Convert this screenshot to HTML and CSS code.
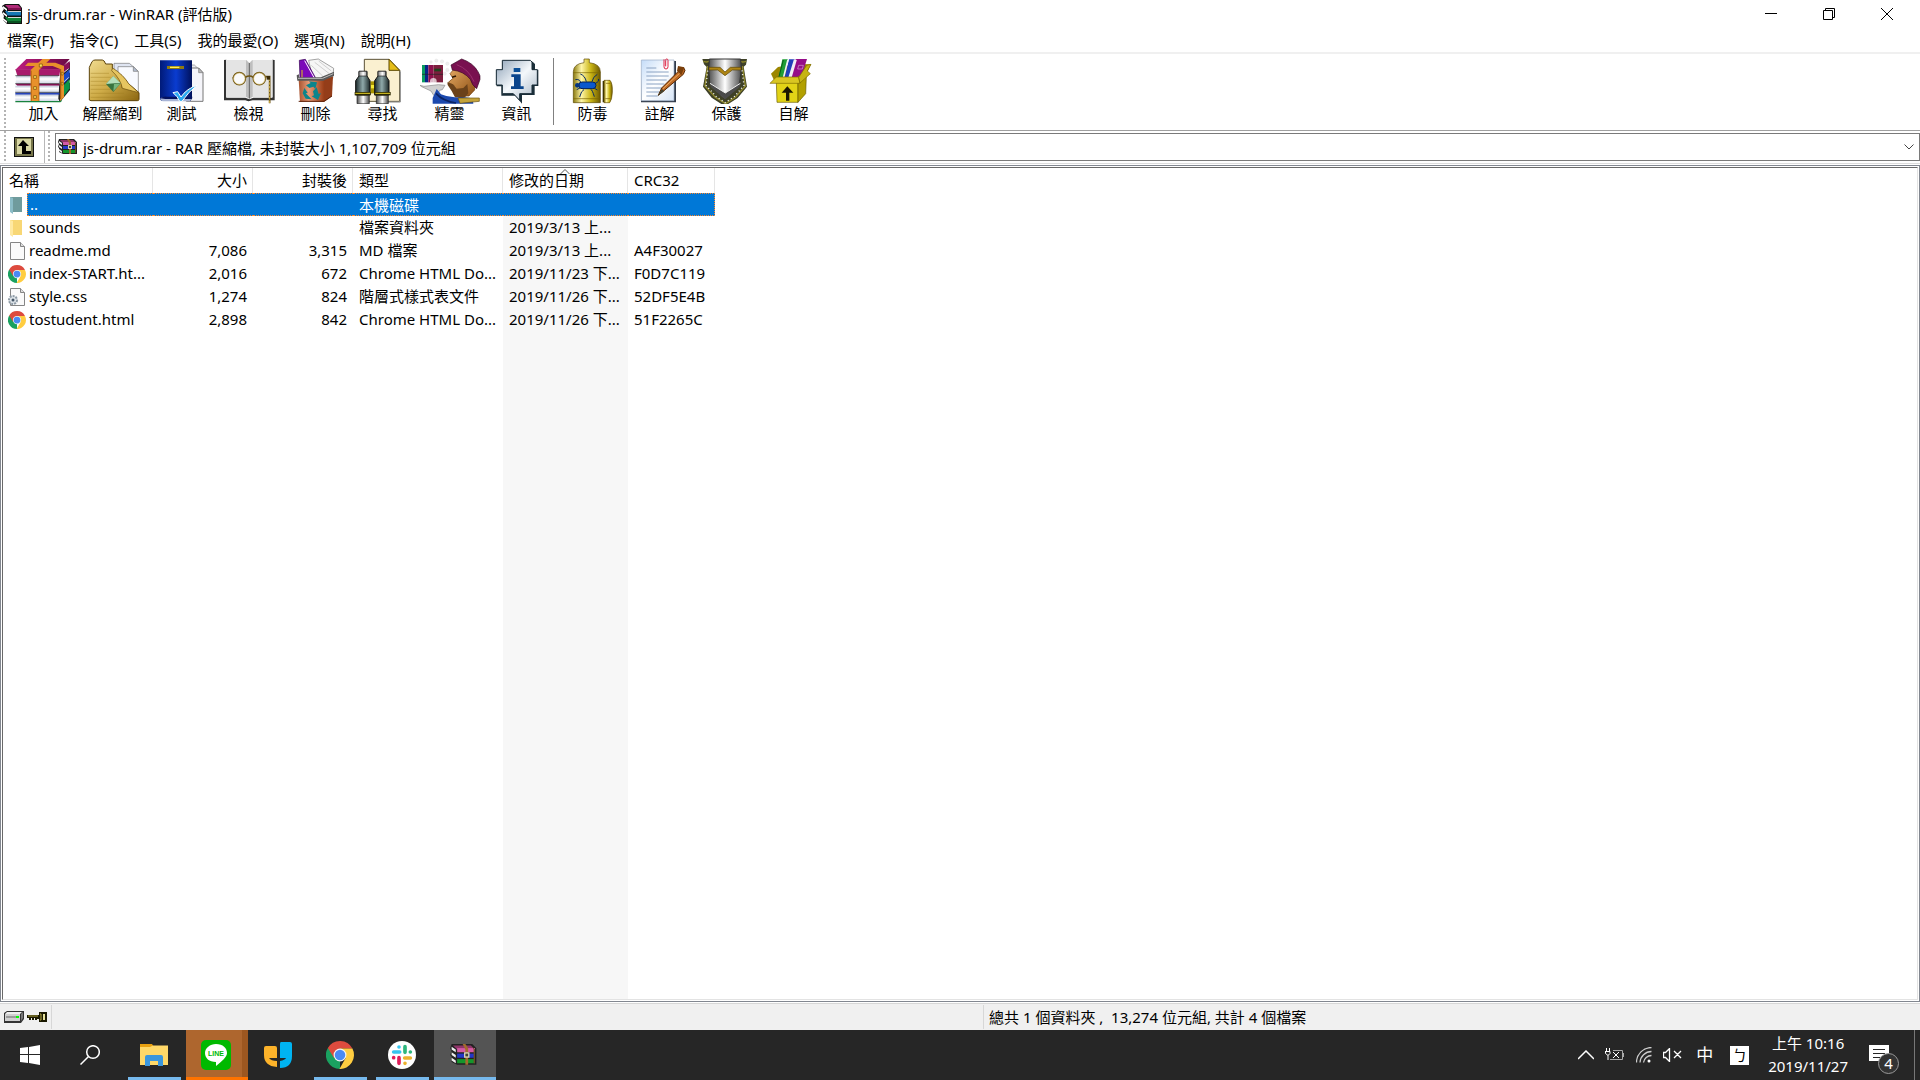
FILE: index.html
```
<!DOCTYPE html>
<html lang="zh-Hant">
<head>
    <meta charset="UTF-8">
    <meta name="viewport" content="width=device-width, initial-scale=1.0">
    <title>js-drum.rar - WinRAR (評估版)</title>
    <link rel="stylesheet" href="styles.css">
</head>
<body>
    <!-- shared gradients and icons -->
    <svg class="defs" width="0" height="0" aria-hidden="true">
        <defs>
            <linearGradient id="gold"><stop offset="0" stop-color="#8a7a10"/><stop offset=".3" stop-color="#fff6a8"/><stop offset=".65" stop-color="#c9b414"/><stop offset="1" stop-color="#6e5a00"/></linearGradient>
            <linearGradient id="folder" x2="1" y2="1"><stop offset="0" stop-color="#f0dc90"/><stop offset=".5" stop-color="#cfac48"/><stop offset="1" stop-color="#8a6510"/></linearGradient>
            <linearGradient id="plum"><stop offset="0" stop-color="#bd1c7e"/><stop offset="1" stop-color="#6a0a44"/></linearGradient>
            <linearGradient id="pages" y2="1" x2="0"><stop offset="0" stop-color="#b9c3d6"/><stop offset=".4" stop-color="#fff"/><stop offset="1" stop-color="#cfd6e4"/></linearGradient>
            <linearGradient id="blue"><stop offset="0" stop-color="#001a78"/><stop offset=".5" stop-color="#0a3cd0"/><stop offset="1" stop-color="#00115c"/></linearGradient>
            <linearGradient id="steel"><stop offset="0" stop-color="#4d4d4d"/><stop offset=".5" stop-color="#fff"/><stop offset="1" stop-color="#4a4a4a"/></linearGradient>
            <linearGradient id="tube"><stop offset="0" stop-color="#1d2a2c"/><stop offset=".5" stop-color="#8fa9aa"/><stop offset="1" stop-color="#1c2829"/></linearGradient>
            <linearGradient id="bin"><stop offset="0" stop-color="#a85430"/><stop offset=".4" stop-color="#e79b77"/><stop offset="1" stop-color="#9a3d16"/></linearGradient>
            <linearGradient id="bubble" x2="1" y2="1"><stop offset="0" stop-color="#8fa3b8"/><stop offset=".5" stop-color="#f4f8fb"/><stop offset="1" stop-color="#a5b4c4"/></linearGradient>
            <linearGradient id="sheet" x2="1" y2="1"><stop offset="0" stop-color="#c4dcf8"/><stop offset=".5" stop-color="#fff"/><stop offset="1" stop-color="#d7e5f7"/></linearGradient>
            <linearGradient id="skin" x2="1" y2="1"><stop offset="0" stop-color="#e9ad66"/><stop offset="1" stop-color="#8a4d12"/></linearGradient>
        </defs>
        <symbol id="books" viewBox="0 0 20 20">
            <path d="M3 0h14l3 4v16H5l-4-4 1-4-2-4 2-3-2-3z" fill="#111"/>
            <path d="M3 1h13l3 3H6z" fill="#b02a78"/><path d="M6 4h13v2H6z" fill="#7a0f4c"/>
            <path d="M3 7h3l1 1h12v4H6z" fill="#1878b4"/><path d="M6 11h13v1H6z" fill="#0b4470"/>
            <path d="M3 13h3l1 1h12v4H6z" fill="#128238"/><path d="M6 17h13v2H6z" fill="#075020"/>
            <path d="M1 2l4 3v2L1 4zM1 8l4 3v2l-4-3zM1 14l4 3v2l-4-3z" fill="#fff"/>
            <path d="M6 7h13v1H6zM6 13h13v1H6z" fill="#d7d7d7"/>
        </symbol>
        <symbol id="belted" viewBox="0 0 20 16">
            <path d="M1 0h15l3 3v12H5l-4-2V9l-1-1 1-3-1-2z" fill="#222"/>
            <path d="M2 1h13l3 3H5z" fill="#8f3569"/><path d="M5 3h13v3H5z" fill="#d45aa5"/>
            <path d="M5 7h13v3H5z" fill="#2336c8"/><path d="M5 11h13v3H5z" fill="#14962c"/>
            <path d="M1 2l3 2v2L1 4zM1 6l3 2v2L1 8zM1 10l3 2v2l-3-2z" fill="#eee"/>
            <path d="M9 0h2l2 3v12h-2V4z" fill="#a26b2d"/><path d="M10 6h4v4h-4z" fill="#d9d0b5"/><path d="M11 7h2v2h-2z" fill="#443"/>
            <path d="M16 2l2 2v10h-1V4z" fill="#6b4b24"/>
        </symbol>
        <symbol id="chrome" viewBox="0 0 48 48">
            <path d="M24 24V48A24 24 0 0 1 3.200 12z" fill="#1aa160"/>
            <path d="M24 13h21.300A24 24 0 0 0 3.200 12l10.500 17z" fill="#dd4b3e"/>
            <path d="M45.300 13H24l9.500 16.500L23 48A24 24 0 0 0 45.300 13z" fill="#ffcd40"/>
            <circle cx="24" cy="24" r="11" fill="#f4f4f4"/><circle cx="24" cy="24" r="9" fill="#4a8af4"/>
        </symbol>
        <symbol id="page" viewBox="0 0 15 18">
            <path d="M.5.5h10l4 4v13H.5z" fill="#fafafa" stroke="#858585"/><path d="M10.500.5v4h4" fill="#ddd" stroke="#858585"/>
        </symbol>
    </svg>

    <header class="titlebar">
        <svg class="app-icon" width="20" height="20"><use href="#books"/></svg>
        <h1>js-drum.rar - WinRAR (評估版)</h1>
        <div class="window-controls">
            <button aria-label="最小化"><svg width="12" height="12"><path d="M0 5.500h12" stroke="#000"/></svg></button>
            <button aria-label="還原"><svg width="12" height="12" fill="none" stroke="#000"><path d="M.5 2.500h9v9h-9zM2.500 2V.5h9v9H10"/></svg></button>
            <button aria-label="關閉"><svg width="12" height="12"><path d="M0 0l12 12M12 0L0 12" stroke="#000"/></svg></button>
        </div>
    </header>

    <nav class="menubar">
        <button>檔案(F)</button>
        <button>指令(C)</button>
        <button>工具(S)</button>
        <button>我的最愛(O)</button>
        <button>選項(N)</button>
        <button>說明(H)</button>
    </nav>

    <div class="toolbar">
        <span class="grip"></span>
        <button>
            <svg viewBox="36 24 189 138">
                <path d="M182 55l28-18v22l-8 7v2l8 0v22l-8 6v2h8v22l-30 36-6-10z" fill="#222"/>
                <path d="M182 53l27-20v22l-27 20z" fill="#8a0f58"/><path d="M182 82l27-24v26l-27 27z" fill="#1948c4"/><path d="M182 115l27-28v28l-27 36z" fill="#0d9448"/>
                <path d="M180 76l26-20M180 107l26-25" stroke="#c6cbd8" stroke-width="3"/>
                <path d="M79 27h130l-28 32H46z" fill="url(#plum)"/><path d="M46 58h135l-3 19H52z" fill="#a81a6c"/>
                <path d="M48 77h126l4 24H47z" fill="url(#pages)"/><path d="M46 101h132v6H52z" fill="#8a1058"/>
                <path d="M46 107h130v21H45z" fill="url(#pages)"/><path d="M46 128h132v6H46z" fill="#2443b8"/>
                <path d="M45 134h130v19H46z" fill="url(#pages)"/><path d="M46 153h134l5-5v6l-4 3H46z" fill="#18823e"/>
                <path d="M46 127h132M46 101h132M46 77h132" stroke="#222" stroke-width="2"/>
                <path d="M84 38h82l26 10v94l-12 11V57l-22-9H75z" fill="#e8912b"/><path d="M182 57v90" stroke="#9d5408" stroke-width="3"/>
                <path d="M127 27h24l-34 33v93H92V60z" fill="#e8912b"/><path d="M94 62v91M117 62v91" stroke="#a45a0c" stroke-width="2"/>
                <path d="M101 77h8v8h-8zM101 110h8v8h-8zM101 137h8v8h-8zM118 42h9v9h-9zM184 67h5v8h-5zM184 97h5v8h-5z" fill="#f9e560" stroke="#7a4300" stroke-width="2"/>
            </svg>
            加入
        </button>
        <button class="wide">
            <svg viewBox="243 24 189 138">
                <path d="M342 40h46l14 12v70h-60z" fill="#dfe5f2" stroke="#777" stroke-width="2"/><path d="M354 50h46l15 14v62h-61z" fill="#f8faff" stroke="#777" stroke-width="2"/><path d="M400 50v14h14z" fill="#b5bfd2" stroke="#777" stroke-width="2"/>
                <path d="M268 150V52l8-17q4-5 9-5h22q6 0 10 12h20v14q34 20 48 45l32 27v20q0 4-5 4H273z" fill="url(#folder)" stroke="#5c430a" stroke-width="3"/>
                <path d="M272 70h55M272 82h60M272 94h50M272 106h50M272 118h60M272 130h100M272 142h130" stroke="#a07d20" stroke-width="2" opacity=".6"/>
                <path d="M333 58q30 18 32 55l52 15q-52-20-76-66z" fill="#8a640a"/><path d="M338 54q32 20 48 47l30 27-49-13q-5-28-32-53z" fill="#e6c560" stroke="#6b4f0d" stroke-width="2"/>
                <path d="M340 78l22 22-22 26-22-24z" fill="#38733e"/><path d="M340 78l22 22h-18l-26 2z" fill="#b6dfba"/><path d="M342 102h18l-20 22z" fill="#78b67d"/>
            </svg>
            解壓縮到
        </button>
        <button>
            <svg viewBox="450 24 189 138">
                <path d="M560 45h23l13 12v86h-40z" fill="#e9e9ee" stroke="#888" stroke-width="2"/><path d="M560 54h36l13 14v86h-50z" fill="#f5f5fa" stroke="#777" stroke-width="3"/><path d="M596 54v14h13z" fill="#bbb" stroke="#777" stroke-width="2"/>
                <path d="M480 31h96v114l-4 8h-86q-6-2-6-8z" fill="url(#blue)"/><path d="M481 145q7-5 20-4h74l-4 13h-83q-6-2-7-9z" fill="#a9b5d6"/><path d="M481 145q7-6 20-5h76l-1 7h-80z" fill="#04125f"/>
                <path d="M501 48h51v9h-51z" fill="#8e7a10"/><path d="M510 50h28v4h-28z" fill="#ffef5a"/>
                <path d="M519 128l14-3 10 16q16-25 50-36-28 20-47 49h-7q-6-15-20-26z" fill="#28a9f2" stroke="#fff" stroke-width="3"/>
            </svg>
            測試
        </button>
        <button>
            <svg viewBox="21 24 189 138">
                <path d="M42 30v121h64q8 5 22 0h66V30l-7-1v114h-57l-12 5-12-5H49V29z" fill="#333"/>
                <path d="M48 30h62l8 8 8-8h62v112h-62q-5 0-8 5-3-5-9-5H48z" fill="#e4e4e4"/>
                <path d="M108 30l10 10 10-10v110l-10 6-10-6z" fill="#bebebe"/><path d="M118 40v105" stroke="#333" stroke-width="3" stroke-dasharray="4 2"/>
                <g fill="none" stroke="#6e5411" stroke-width="5"><circle cx="88" cy="86" r="18"/><circle cx="148" cy="86" r="18"/><path d="M68 85l6-3M106 82q12-8 24 0M166 80h13v80"/></g>
                <circle cx="88" cy="86" r="17" fill="#fafafa" stroke="#dbc374" stroke-width="2"/><circle cx="148" cy="86" r="17" fill="#fafafa" stroke="#dbc374" stroke-width="2"/>
                <path d="M178 86v74" stroke="#d0b04a" stroke-width="3" stroke-dasharray="7 4"/><path d="M170 78h10v11h-10z" fill="#3b2c08"/>
            </svg>
            檢視
        </button>
        <button>
            <svg viewBox="222 24 189 138">
                <path d="M296 31l29-4 46 28-3 30h-60z" fill="#f6f6f6" stroke="#777" stroke-width="2"/><path d="M314 37l44 34M326 33l38 30M304 46l34 32" stroke="#bbb" stroke-width="2"/>
                <path d="M268 31l18-3 32 58h-48z" fill="#7b09b9" stroke="#33004e" stroke-width="2"/><path d="M284 32l30 54" stroke="#fff" stroke-width="3"/><path d="M276 60v26" stroke="#dbc910" stroke-width="3"/>
                <path d="M266 88h76v68h-72z" fill="url(#bin)"/><path d="M342 88l27-9-3 60-24 17z" fill="#943d19"/><path d="M266 154h76l24-16" fill="none" stroke="#5d230c" stroke-width="3"/>
                <path d="M260 76l7-3v9h65l40-17v12l-32 15h-78z" fill="#595959"/><path d="M264 85h74l32-14" fill="none" stroke="#bdbdbd" stroke-width="3"/>
                <g fill="#0b858c"><path d="M288 106l14-7-5-5 24 3-5 20-6-7-12 4z"/><path d="M320 112l6 20 7-3-9 21-19-11 7-3-3-12z"/><path d="M283 114l10 14-6 2 18 18-18-2-9-16z"/></g>
            </svg>
            刪除
        </button>
        <button>
            <svg viewBox="423 24 189 138">
                <path d="M463 28h74l32 33v93H463z" fill="#faf0d0" stroke="#5a5136" stroke-width="3"/><path d="M537 28v33h32z" fill="#e5bd18" stroke="#5c4900" stroke-width="3"/><path d="M571 64v92H520" fill="none" stroke="#888" stroke-width="3"/>
                <path d="M481 94h16v36h-16z" fill="#a99400"/><path d="M483 105h12v10h-12z" fill="#f6ea35"/>
                <g><path d="M447 64h24v14l9 14v43H437V92l10-14z" fill="url(#tube)" stroke="#111" stroke-width="3"/><path d="M447 64h23v14h-23zM441 136h37v25h-37z" fill="url(#steel)" stroke="#222" stroke-width="2"/><path d="M434 126h48v10h-48z" fill="#2b2800"/><path d="M436 130h44" stroke="#e4cf2a" stroke-width="3"/></g>
                <g><path d="M504 64h24v14l9 14v43h-43V92l10-14z" fill="url(#tube)" stroke="#111" stroke-width="3"/><path d="M504 64h23v14h-23zM499 136h36v25h-36z" fill="url(#steel)" stroke="#222" stroke-width="2"/><path d="M494 126h48v10h-48z" fill="#2b2800"/><path d="M496 130h44" stroke="#e4cf2a" stroke-width="3"/></g>
            </svg>
            尋找
        </button>
        <button>
            <svg viewBox="24 24 189 138">
                <g fill="#eee" stroke="#ddd"><circle cx="63" cy="36" r="4"/><circle cx="79" cy="32" r="5"/><circle cx="96" cy="34" r="5"/><circle cx="112" cy="41" r="5"/><circle cx="112" cy="60" r="5"/><circle cx="104" cy="71" r="5"/></g>
                <path d="M36 45h9v52h-9z" fill="#0a9a60"/><path d="M45 45h10v52H45z" fill="#082488"/><path d="M55 45h15v52H55z" fill="#8d104c"/><path d="M70 45h29v52H70z" fill="#7d1e3e"/><path d="M73 56h20v8H73z" fill="#1d451d"/><path d="M36 73h63" stroke="#222" stroke-width="2"/><circle cx="70" cy="94" r="10" fill="#fff" opacity=".7"/>
                <path d="M30 106l12 3 43-5 20 2-8 13-8 2-8 18-10-3-8-13-28-13z" fill="#d0d0d0" stroke="#888" stroke-width="2"/>
                <path d="M68 161v-17l12-27 13 16q30 13 60 7l35 5 2 16z" fill="#1c49ae"/><path d="M78 130q20 23 60 29" fill="none" stroke="#0b2465" stroke-width="5"/>
                <path d="M120 71l12-14 35-9 30 30-3 42-17 18h-38l-13-22 6-9-17-10 14-12z" fill="url(#skin)" stroke="#6d3a08" stroke-width="2"/>
                <path d="M112 97l17 6 11 13 20-2 12-12 3 28-10 12h-30l-10-19-12-18z" fill="#6b421a"/><path d="M126 82l12-4" stroke="#301700" stroke-width="5"/>
                <path d="M144 144h64v10l-58 6z" fill="#c4a43b" stroke="#694e0c" stroke-width="2"/>
                <path d="M123 45l32-18q35 12 49 38 8 11 6 23l-10 28q-14-10-19-28-19-24-54-28z" fill="#791150" stroke="#350422" stroke-width="2"/><path d="M140 44q36 13 52 51" fill="none" stroke="#98306c" stroke-width="3"/>
            </svg>
            精靈
        </button>
        <button>
            <svg viewBox="225 24 189 138">
                <path d="M278 35h90l7 7v17h10v49h-11v27h-38v26l-20-24h-42v-28h-14V60h16z" fill="#1b2f3a"/>
                <path d="M277 31h84l5 5v23h16v46h-16v26h-37v20l-19-20h-33v-26h-18V59h18z" fill="url(#bubble)" stroke="#172a35" stroke-width="3"/>
                <path d="M311 54h20v12h-20z" fill="#0b4f97"/><path d="M304 73h28v36h9v8h-38v-8h9V81h-8z" fill="#0a458c"/>
            </svg>
            資訊
        </button>
        <span class="divider"></span>
        <button>
            <svg viewBox="453 24 189 138">
                <path d="M522 27h16v11q33 4 33 27v93h-81V65q0-23 32-27z" fill="url(#gold)" stroke="#5a4700" stroke-width="2"/><path d="M490 68h81M490 146h81" stroke="#7a6500" stroke-width="2"/>
                <path d="M514 105q-2-20-18-16M529 95q-4-18-18-23M546 95q3-15 16-22M555 101q15-8 10-14M500 119q12-10 20-3M509 141q5-20 13-22M553 140q-6-21-11-22M562 120q-8-7-16-6" fill="none" stroke="#052a66" stroke-width="3"/>
                <rect x="506" y="96" width="52" height="20" rx="10" fill="#0a58cd" stroke="#032056" stroke-width="3"/><circle cx="502" cy="106" r="7" fill="#06357f"/>
                <path d="M582 91h18q8 9 7 35-1 24-8 32h-17z" fill="url(#gold)" stroke="#624b00" stroke-width="2"/><path d="M580 93v64" stroke="#3f3300" stroke-width="4"/><path d="M588 100h13M586 146h16" stroke="#745800" stroke-width="2"/>
            </svg>
            防毒
        </button>
        <button>
            <svg viewBox="24 24 189 138">
                <path d="M67 33h101v124H63v-5z" fill="#333c4a"/><path d="M64 30h98v122H64z" fill="url(#sheet)" stroke="#99abc3" stroke-width="2"/>
                <path d="M79 54h30M79 66h67M79 78h67M79 90h61M79 102h54M79 114h46M79 126h40M79 138h34" stroke="#8aa2c2" stroke-width="3"/>
                <path d="M132 28v22q0 7 6 7t6-7V31q0-4-4-4t-3 5v17" fill="none" stroke="#df2444" stroke-width="3"/>
                <path d="M115 136l10-22 56-56 10-5 4 8-5 12-58 49z" fill="#bd6925" stroke="#592800" stroke-width="3"/><path d="M129 116l55-51" stroke="#edae63" stroke-width="3"/><path d="M171 62l13 14 9-24-19-4z" fill="#7a3f0b"/><path d="M113 138l12-21 8 6z" fill="#443"/>
            </svg>
            註解
        </button>
        <button>
            <svg viewBox="225 24 189 138">
                <path d="M247 27h134l-3 17-7 6 10 60-28 34-31 20h-15l-32-21-26-33 11-59-8-8z" fill="#3f4127"/>
                <path d="M250 34q16 6 22-5M378 34q-16 6-22-5M263 48l-8 60 31 34 31 19 29-19 30-34-9-60" fill="none" stroke="#8f882a" stroke-width="4"/>
                <path d="M268 27h94l2 30-5 42-18 26-27 21-25-21-20-27-3-41z" fill="url(#steel)" stroke="#333" stroke-width="3"/>
                <path d="M267 52h33l15 14 16-14h32v8h-26l-22 17-22-17h-26z" fill="#ad8414" stroke="#5a4305" stroke-width="2"/>
                <path d="M268 98l48 31 47-31-5 14-42 36-43-36z" fill="#4b4b4b"/><path d="M270 100l46 29 45-29" fill="none" stroke="#eee" stroke-width="3"/>
                <path d="M263 62l-5 44 31 34 26 18 29-19 28-33-6-46" fill="none" stroke="#fff" stroke-width="4" stroke-dasharray="3 8"/>
            </svg>
            保護
        </button>
        <button>
            <svg viewBox="426 24 189 138">
                <path d="M453 71l21-20 52-9 47 1-15 32-24 24h-68z" fill="#9c8600"/>
                <path d="M487 28h17l-14 57h-15z" fill="#1e9d35"/><path d="M507 28h17l-18 57h-13z" fill="#2140ba"/><path d="M527 27h34l-14 45-20 13h-20z" fill="#950d89"/>
                <path d="M504 29l-14 56M524 29l-17 56M528 29l-16 55" stroke="#efeff5" stroke-width="5"/><path d="M536 46h14l-3 11h-14z" fill="none" stroke="#d4a5d0" stroke-width="2"/><path d="M490 30l-13 50" stroke="#096017" stroke-width="3"/>
                <path d="M469 96h65v61h-63z" fill="#e2d316" stroke="#685c00" stroke-width="2"/><path d="M534 96l25-18-2 53-23 26z" fill="#b2a000" stroke="#685c00" stroke-width="2"/>
                <path d="M450 100l19-19h67l4 19z" fill="#d9c622" stroke="#7b6900" stroke-width="2"/><path d="M536 82l24-36 13-3-11 20 9 8-31 28z" fill="#c6b412" stroke="#7b6900" stroke-width="2"/>
                <path d="M502 109l18 19h-12v24h-10v-24h-13z" fill="#1c1700"/>
            </svg>
            自解
        </button>
    </div>

    <div class="addressbar">
        <span class="grip"></span>
        <button class="up" aria-label="上一層">
            <svg width="20" height="20"><path d="M0 0h20v20H0z" fill="#111"/><path d="M1 1h18v18H1z" fill="#77764a"/><path d="M3 2h14v15H3z" fill="#d8d7a4"/><path d="M9 3l6 6h-3v5h5v3H8V9H4z" fill="#000"/></svg>
        </button>
        <span class="grip second"></span>
        <div class="path">
            <svg width="20" height="16"><use href="#belted"/></svg>
            <select aria-label="路徑">
                <option>js-drum.rar - RAR 壓縮檔, 未封裝大小 1,107,709 位元組</option>
            </select>
            <svg class="arrow" width="10" height="6"><path d="M.5.5L5 5 9.500.5" fill="none" stroke="#444"/></svg>
        </div>
    </div>

    <main class="list">
        <div class="list-inner">
            <table>
                <colgroup><col class="name"><col class="size"><col class="packed"><col class="type"><col class="date"><col class="crc"></colgroup>
                <thead>
                    <tr>
                        <th>名稱</th>
                        <th class="num">大小</th>
                        <th class="num">封裝後</th>
                        <th>類型</th>
                        <th class="sorted">修改的日期<svg width="10" height="6"><path d="M.5 5L5 .5 9.500 5" fill="none" stroke="#555"/></svg></th>
                        <th>CRC32</th>
                    </tr>
                </thead>
                <tbody>
                    <tr class="selected">
                        <td><div class="file"><svg viewBox="0 0 20 20"><path d="M3 2h12v15H3z" fill="#6f9b9d"/><path d="M3 2l3 1v16l-3-2z" fill="#8bbcc7"/></svg><span>..</span></div></td>
                        <td></td><td></td><td>本機磁碟</td><td></td><td></td>
                    </tr>
                    <tr>
                        <td><div class="file"><svg viewBox="0 0 20 20"><path d="M3 2h12v15H3z" fill="#f8d775"/><path d="M3 2l3 1v16l-3-2z" fill="#ffe9a2"/></svg><span>sounds</span></div></td>
                        <td></td><td></td><td>檔案資料夾</td><td>2019/3/13 上...</td><td></td>
                    </tr>
                    <tr>
                        <td><div class="file"><svg viewBox="0 0 20 20"><use href="#page" x="3" y="1" width="15" height="18"/></svg><span>readme.md</span></div></td>
                        <td class="num">7,086</td><td class="num">3,315</td><td>MD 檔案</td><td>2019/3/13 上...</td><td>A4F30027</td>
                    </tr>
                    <tr>
                        <td><div class="file"><svg viewBox="0 0 20 20"><use href="#chrome" x="1" y="1" width="18" height="18"/></svg><span>index-START.ht...</span></div></td>
                        <td class="num">2,016</td><td class="num">672</td><td>Chrome HTML Do...</td><td>2019/11/23 下...</td><td>F0D7C119</td>
                    </tr>
                    <tr>
                        <td><div class="file"><svg viewBox="0 0 20 20"><use href="#page" x="3" y="1" width="15" height="18"/><circle cx="6" cy="13" r="4" fill="#dde3e8" stroke="#8d9aa5" stroke-width="2" stroke-dasharray="2 1"/><circle cx="6" cy="13" r="1.500" fill="#456"/></svg><span>style.css</span></div></td>
                        <td class="num">1,274</td><td class="num">824</td><td>階層式樣式表文件</td><td>2019/11/26 下...</td><td>52DF5E4B</td>
                    </tr>
                    <tr>
                        <td><div class="file"><svg viewBox="0 0 20 20"><use href="#chrome" x="1" y="1" width="18" height="18"/></svg><span>tostudent.html</span></div></td>
                        <td class="num">2,898</td><td class="num">842</td><td>Chrome HTML Do...</td><td>2019/11/26 下...</td><td>51F2265C</td>
                    </tr>
                </tbody>
            </table>
        </div>
    </main>

    <footer class="statusbar">
        <div class="status-icons">
            <svg width="20" height="12"><path d="M0 2l3-2h17v8l-3 4H0z" fill="#333"/><path d="M1 3l2-2h15l-2 2z" fill="#eee"/><path d="M1 3h15v7H1z" fill="#d0d0d0"/><path d="M17 3l2-2v6l-2 3z" fill="#777"/><path d="M2 6h10" stroke="#666"/><path d="M12 5h3v2h-3z" fill="#0f0"/></svg>
            <svg width="20" height="12"><path d="M0 4h12V1h8v10h-8V8h-2v1H8V7H7v2H5V7H4v2H2V7H0z" fill="#1a1800"/><path d="M1 5h10M13 3h1v6h-1" stroke="#b3a842" fill="none"/><path d="M16 3h2v6h-2z" fill="#e7e29c"/></svg>
        </div>
        <div class="status-left"></div>
        <div class="status-total">總共 1 個資料夾 ,&nbsp; 13,274 位元組, 共計 4 個檔案</div>
    </footer>

    <div class="taskbar">
        <button class="task start" aria-label="開始"><svg width="20" height="20" fill="#fff"><path d="M0 3l8-1v7H0zM9 2l11-2v9H9zM0 10h8v8l-8-1zM9 10h11v10L9 18z"/></svg></button>
        <button class="task start" aria-label="搜尋"><svg width="20" height="20" fill="none" stroke="#fff" stroke-width="1.500"><circle cx="13" cy="7" r="6.300"/><path d="M8.500 11.500L.5 19.500"/></svg></button>
        <button class="task open explorer" aria-label="檔案總管"><svg width="28" height="24"><path d="M0 1h12l2 3h14v5H0z" fill="#e8a010"/><path d="M0 4h10l3-1.500h15V22H0z" fill="#ffd868"/><path d="M5 14q0-2 2-2h14q2 0 2 2v9h-5v-5h-8v5H5z" fill="#3b96dc"/></svg></button>
        <button class="task line" aria-label="LINE"><svg width="30" height="30"><rect width="30" height="30" rx="5" fill="#00b900"/><path d="M15 4c7 0 11 4 11 9 0 4-5 8-11 13v-4C8 22 4 18 4 13s5-9 11-9z" fill="#fff"/><text x="15" y="16" text-anchor="middle">LINE</text></svg></button>
        <button class="task" aria-label="Yourator"><svg width="28" height="26"><path d="M2 4h9q2 0 2 2v10H5q2 3 8 3v6Q0 24 0 13V6q0-2 2-2z" fill="#fdb32a"/><path d="M17 0h9q2 0 2 2v12q0 12-12 12V19q5-1 6-3h-6V2q0-2 1-2z" fill="#00b4f2"/></svg></button>
        <button class="task open" aria-label="Chrome"><svg width="28" height="28"><use href="#chrome"/></svg></button>
        <button class="task open" aria-label="Slack"><svg width="28" height="28" viewBox="0 0 84 84"><circle cx="42" cy="42" r="42" fill="#fff"/><g stroke-width="11" stroke-linecap="round"><path d="M33 18v0M17 33h18" stroke="#36c5f0"/><path d="M51 17v17M67 33v0" stroke="#2eb67d"/><path d="M50 51h17M51 67v0" stroke="#ecb22e"/><path d="M33 50v17M17 50v0" stroke="#e01e5a"/></g></svg></button>
        <button class="task open active" aria-label="WinRAR"><svg width="28" height="22"><use href="#belted"/></svg></button>

        <div class="tray">
            <button aria-label="顯示隱藏的圖示"><svg width="16" height="10"><path d="M0 9l8-8 8 8" fill="none" stroke="#fff" stroke-width="1.500"/></svg></button>
            <svg width="20" height="14" fill="none" stroke="#aaa"><path d="M8 2.500h9.500v9H5M18.500 5v4"/><path d="M1.500 0v3M4.500 0v3M0 3.500h5v2L3.500 7h-1L.5 5.500v-2M3 7v5M8 4l6 6M14 4l-6 6" stroke="#fff"/></svg>
            <svg width="16" height="16" fill="none" stroke="#ccc"><path d="M.5 15.500A15 15 0 0 1 15.500.500M4 15.500A11.500 11.500 0 0 1 15.500 4.500M7.500 15.500A8 8 0 0 1 15.500 8.500" stroke-width="1.300"/><circle cx="13" cy="14" r="1.500" fill="#fff" stroke="none"/></svg>
            <svg width="20" height="14" fill="none" stroke="#fff"><path d="M.5 4.500h2l4-4v13l-4-4h-2zM11 3l7 7M18 3l-7 7" stroke-width="1.300"/></svg>
            <button class="ime">中</button>
            <button class="bopomofo">ㄅ</button>
            <div class="clock"><span>上午 10:16</span><span>2019/11/27</span></div>
            <button class="notice" aria-label="通知">
                <svg width="20" height="20"><path d="M0 0h20v16h-6l-4 4v-4H0z" fill="#fff"/><path d="M4 4.500h12M4 8.500h12M4 12.500h7" stroke="#262626"/></svg>
                <span class="badge">4</span>
            </button>
            <button class="show-desktop" aria-label="顯示桌面"></button>
        </div>
    </div>
</body>
</html>
```
FILE: styles.css
```
* {
    box-sizing: border-box;
}
body {
    margin: 0;
    height: 100vh;
    display: flex;
    flex-direction: column;
    overflow: hidden;
    background: #fff;
    color: #000;
    font-family: "Noto Sans", "Noto Sans CJK TC", sans-serif;
    font-size: 15px;
    line-height: 20px;
}
button, select {
    font: inherit;
    color: inherit;
    background: none;
    border: none;
    margin: 0;
    padding: 0;
}
svg {
    display: block;
    flex: none;
}
.defs {
    position: absolute;
}

/* title + menu */
.titlebar {
    display: flex;
    align-items: center;
    height: 28px;
    padding: 0 4px 0 2px;
}
.titlebar h1 {
    margin: 0 0 0 5px;
    font-size: 15px;
    font-weight: normal;
}
.window-controls {
    display: flex;
    margin-left: auto;
}
.window-controls button {
    width: 58px;
    height: 28px;
    display: flex;
    align-items: center;
    justify-content: center;
}
.menubar {
    display: flex;
    gap: 16px;
    height: 26px;
    padding-left: 7px;
    border-bottom: 2px solid #f0f0f0;
}

/* toolbar */
.toolbar {
    display: flex;
    align-items: flex-start;
    height: 77px;
    padding: 4px 0 0 4px;
    border-bottom: 1px solid #a0a0a0;
}
.grip {
    width: 2px;
    margin-right: 4px;
    align-self: stretch;
    background: repeating-linear-gradient(#b4b4b4 0 2px, transparent 2px 4px);
}
.toolbar button {
    width: 67px;
    display: flex;
    flex-direction: column;
    align-items: center;
    line-height: 19px;
    white-space: nowrap;
}
.toolbar .wide {
    width: 71px;
}
.toolbar button svg {
    width: 63px;
    height: 46px;
}
.divider {
    width: 1px;
    height: 67px;
    margin: 0 5px 0 3px;
    background: #808080;
}

/* address */
.addressbar {
    display: flex;
    align-items: center;
    height: 33px;
    padding-left: 4px;
    border-bottom: 1px solid #dcdcdc;
}
.up {
    display: flex;
    align-items: center;
    width: 35px;
    height: 32px;
    padding-left: 4px;
    border-right: 1px solid #b8b8b8;
}
.second {
    margin: 0 5px 0 3px;
}
.path {
    flex: 1;
    display: flex;
    align-items: center;
    height: 28px;
    padding: 0 5px 0 2px;
    border: 1px solid #7a7a7a;
}
.path select {
    flex: 1;
    height: 26px;
    margin-left: 5px;
    padding-top: 2px;
    appearance: none;
    outline: none;
}

/* file list */
.list {
    flex: 1;
    min-height: 0;
    display: flex;
    margin-top: 1px;
    padding: 1px;
    border: 1px solid #828790;
}
.list-inner {
    flex: 1;
    border: 1px solid;
    border-color: #696969 #e3e3e3 #e3e3e3 #696969;
    background: linear-gradient(#f7f7f7, #f7f7f7) 500px 0 / 125px 100% no-repeat;
}
table {
    width: 712px;
    table-layout: fixed;
    border-collapse: separate;
    border-spacing: 0;
}
.name { width: 150px; }
.size { width: 100px; }
.packed { width: 100px; }
.type { width: 150px; }
.date { width: 125px; }
.crc { width: 87px; }
th, td {
    height: 23px;
    padding: 0 6px 1px;
    text-align: left;
    font-weight: normal;
    white-space: nowrap;
}
td:first-child {
    padding: 0 0 0 4px;
}
th {
    height: 25px;
    background: #fff;
    box-shadow: inset -1px 0 #e5e5e5;
}
.num {
    text-align: right;
}
.sorted {
    position: relative;
}
.sorted svg {
    position: absolute;
    top: 1px;
    left: 57px;
}
.file {
    display: flex;
    align-items: center;
}
.file svg {
    width: 20px;
    height: 20px;
}
.file span {
    flex: 1;
    height: 23px;
    padding-left: 2px;
    line-height: 22px;
}
.selected td {
    padding-bottom: 0;
    background: #0078d7;
    color: #fff;
    border-top: 1px dotted #ff8728;
    border-bottom: 1px dotted #ff8728;
}
.selected td:first-child {
    background: #fff;
    border: none;
}
.selected td:last-child {
    border-right: 1px dotted #ff8728;
}
.selected .file span {
    background: #0078d7;
    border: 1px dotted #ff8728;
    border-right: none;
    line-height: 20px;
}

/* status */
.statusbar {
    display: flex;
    align-items: center;
    height: 27px;
    margin-top: 1px;
    border-top: 1px solid #d7d7d7;
    background: #f0f0f0;
}
.status-icons {
    display: flex;
    align-items: center;
    gap: 3px;
    width: 52px;
    height: 24px;
    padding-left: 4px;
    border-right: 1px solid #d7d7d7;
}
.status-left {
    flex: 1;
}
.status-total {
    flex: 1;
    height: 24px;
    padding-left: 5px;
    line-height: 24px;
    border-left: 1px solid #d7d7d7;
}

/* taskbar */
.taskbar {
    display: flex;
    height: 50px;
    background: #262626;
    color: #fff;
}
.task {
    width: 62px;
    display: flex;
    align-items: center;
    justify-content: center;
    border-bottom: 3px solid transparent;
    padding: 2px 2px 0 0;
}
.start {
    width: 60px;
    padding-right: 0;
}
.explorer {
    margin-left: 4px;
}
.open {
    border-image: linear-gradient(90deg, transparent 5px, #76b9ed 5px 56px, transparent 56px) 1;
    border-style: solid;
    border-width: 0 0 3px;
}
.active {
    background: #545454;
    border-image: none;
    border-color: #76b9ed;
}
.line {
    background: linear-gradient(90deg, #ae662e 56px, #9d5720 56px);
    border-color: #ff7300;
}
.line text {
    font: bold 7px "Liberation Sans", sans-serif;
    fill: #00b900;
}
.tray {
    display: flex;
    align-items: center;
    gap: 11px;
    margin-left: auto;
}
.tray button {
    display: flex;
}
.ime {
    font-size: 17px;
    margin-left: 2px;
}
.tray .bopomofo {
    width: 19px;
    height: 19px;
    margin-left: 6px;
    align-items: center;
    justify-content: center;
    background: #fff;
    color: #000;
}
.clock {
    display: flex;
    flex-direction: column;
    align-items: center;
    line-height: 23px;
    margin-left: 8px;
}
.notice {
    position: relative;
    margin: 0 14px 0 10px;
}
.badge {
    position: absolute;
    left: 9px;
    top: 8px;
    width: 21px;
    height: 21px;
    border: 1px solid #999;
    border-radius: 50%;
    background: #333;
    line-height: 19px;
    text-align: center;
}
.show-desktop {
    width: 6px;
    height: 50px;
    border-left: 1px solid #777;
}
```
